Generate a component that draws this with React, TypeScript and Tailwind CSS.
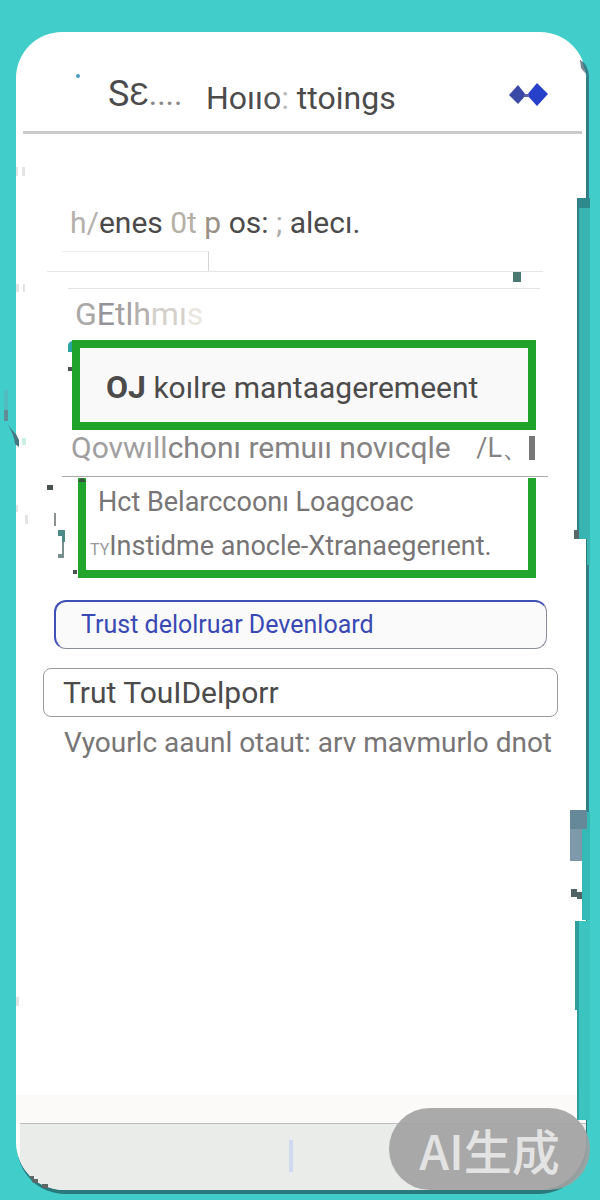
const sans = 'font-["Roboto","Liberation_Sans",sans-serif]';

function Diamonds() {
  return (
    <svg className="h-6 w-10" viewBox="0 0 40 24" aria-hidden="true">
      <path d="M0 12 L9 2 L17 12 L9 21 Z" fill="#3b49a6" />
      <path d="M18 12 L28 0 L39 11 L28 23 Z" fill="#2740c9" />
      <path d="M15 11 h5 v3 h-5 Z" fill="#5a64b0" />
    </svg>
  );
}

/* Broken pixels along the left rim of the card */
function LeftMarks() {
  return (
    <svg className="pointer-events-none absolute top-0 left-0 h-[1200px] w-24" viewBox="0 0 96 1200" aria-hidden="true">
      <path d="M4 390 h4 v30 h-4 Z" fill="#6f9fac" opacity=".35" />
      <path d="M4 410 h4 v11 h-4 Z" fill="#67818d" opacity=".8" />
      <path d="M7 423 Q13 432 16 434 L19 440 V447 L15 444 Q14 434 7 423 Z" fill="#467780" />
      <path d="M22 438 h4 v7 h-4 Z" fill="#c9f2e4" />
      <path d="M16 167 h2 v9 h-2 Z M22 167 h3 v9 h-3 Z M16 284 h3 v8 h-3 Z M23 284 h2 v8 h-2 Z M16 505 h2 v7 h-2 Z M25 515 h3 v9 h-3 Z M16 997 h3 v9 h-3 Z" fill="#e4e4e4" />
      <path d="M68 346 q0 -4 4 -5 v11 h-4 Z" fill="#28a3a5" />
      <path d="M68 367 h4 v4 h-4 Z M47 485 h6 v5 h-6 Z M73 570 h4 v4 h-4 Z" fill="#48524f" />
      <path d="M54 513 h2 v13 h-2 Z" fill="#8d9291" />
      <path d="M58 530 h7 v12 h-3 v-6 h-4 Z" fill="#4b8a86" />
      <path d="M64 542 v16 h-6 v-4 h4 v-12 Z" fill="#77908e" />
      <path d="M30 1176 h4 v3 h4 v4 h-5 Z M42 1184 h6 v4 h-6 Z" fill="#5c6765" />
      <path d="M78 482 q4 -8 8 0 Z" fill="#3c5440" />
    </svg>
  );
}

/* Notches cut into the right rim, with their shadow */
function RightMarks() {
  return (
    <svg className="pointer-events-none absolute top-0 right-0 h-[1200px] w-10" viewBox="560 0 40 1200" aria-hidden="true">
      <path d="M580 60 Q588 64 589 76 V200 H587 V76 Z" fill="#357f8a" />
      <path d="M580 60 q4 2 5 13 l-4 -5 Z" fill="#78858f" />
      <path d="M577 198 H590 V565 H587 V539 H579 V530 H577 Z" fill="#38b5b1" />
      <path d="M577 198 H590 V208 H577 Z" fill="#2f888c" />
      <path d="M577 198 h2 V532 h-2 Z" fill="#347e88" />
      <path d="M574 530 h5 v9 h-5 Z" fill="#57686b" />
      <path d="M587 565 h2 V812 h-2 Z" fill="#357f8a" />
      <path d="M582 812 H590 V920 H582 Z" fill="#35b9b7" />
      <path d="M570 810 H587 V829 H582 V861 H570 Z" fill="#7e9aaa" />
      <path d="M570 810 H587 V829 H570 Z" fill="#66899a" />
      <path d="M571 889 h6 v3 h5 v7 h-5 v-2 h-6 Z" fill="#4f6264" />
      <path d="M575 921 H590 V1120 H577 V1010 H575 Z" fill="#3bc4c0" />
      <path d="M575 921 h4 V1120 h-2 V1010 h-2 Z" fill="#2f9c9d" />
    </svg>
  );
}

function Footer() {
  return (
    <footer className="mt-auto">
      <div className="h-7 bg-[#fbfaf9]" />
      <div className="ml-1 flex h-[67px] justify-center border-t border-[#b9bfc0] bg-[#eaecea]">
        <div className="mt-4 mr-6 h-8 w-1 bg-[#cfdaf0]" />
      </div>
    </footer>
  );
}

export default function App() {
  return (
    <div className={`relative flex min-h-screen flex-col overflow-hidden bg-[#41cdc9] pt-8 pr-3.5 pb-2.5 pl-4 whitespace-nowrap text-[#4c4b4b] ${sans}`}>
      <main className="flex grow flex-col overflow-hidden rounded-t-[46px] rounded-b-[48px] bg-white shadow-[1px_4px_0_#2a7a7c]">
        <header className="mr-1 ml-[7px] flex h-[102px] items-center border-b-[3px] border-[#cbcbcb] pt-8 pl-[53px]">
          <span className="mb-11 h-1 w-1 rounded-full bg-[#4a9cc4]" />
          <h1 className="ml-7 flex items-center text-[32px] leading-10">
            <span className="flex w-[98px]">
              <span className="text-4xl">S</span>
              <span className="mb-2 self-end">Ɛ</span>
              <span className="text-[#888]">....</span>
            </span>
            <span>
              Hoıı<span className="text-[#555]">o</span>
              <span className="text-[#bbb]">:</span> ttoings
            </span>
          </h1>
          <div className="mr-[33px] mb-1.5 ml-auto">
            <Diamonds />
          </div>
        </header>

        <p className="mt-[69px] ml-[54px] text-[30px] leading-10">
          <span className="text-[#b5b0ab]">h/</span>enes <span className="text-[#b5b0a5]">0t</span>{' '}
          <span className="text-[#999186]">p</span> os: <span className="text-[#aaa]">;</span> alecı.
        </p>
        <div className="mt-2 ml-[46px] h-5 w-[147px] border-t border-r border-[#eeeeee] border-r-[#d5d5d5]" />
        <div className="mr-[43px] ml-[31px] flex h-[17px] justify-end border-t border-[#e6e6e6]">
          <span className="mr-[22px] h-2.5 w-2 bg-[#4c7872]" />
        </div>
        <div className="mr-[46px] ml-[52px] h-1.5 border-t border-[#e3e3e3]" />
        <p className="ml-[59px] text-[32px] leading-10">
          <span className="text-[#aaa8a6]">G</span>
          <span className="text-[#96949b]">E</span>
          <span className="text-[#a3a09f]">tl</span>
          <span className="text-[#b3b0ad]">h</span>
          <span className="text-[#d3d0ca]">mı</span>
          <span className="text-[#e9e6df]">s</span>
        </p>

        <button type="button" className="mt-1.5 mr-[50px] ml-14 h-[90px] border-8 border-[#1fa32a] bg-[#f9f9f9] pt-1 pl-[26px] text-left text-[30px] leading-10">
          <span className="text-[32px] font-bold">OJ</span> koılre mantaageremeent
        </button>
        <div className="mr-[51px] ml-[55px] flex h-9 items-center justify-between text-[30px] leading-9 text-[#858383]">
          <p>
            <span className="text-[#a09e9e]">Qovwıll</span>chonı remuıı novıcqle
          </p>
          <p className="flex items-center text-[27px]">
            /L、<span className="h-6 w-1.5 bg-[#777]" />
          </p>
        </div>
        <div className="mt-2.5 mr-[38px] ml-[46px] h-0.5 border-t border-[#aaaaaa]" />

        <section className="mr-[50px] ml-[62px] flex h-[100px] flex-col gap-1 border-8 border-t-0 border-[#22a52c] pt-1 text-[27px] leading-10 text-[#777575]">
          <p className="pl-3">Hct Belarccoonı Loagcoac</p>
          <p className="pl-1">
            <span className="text-base text-[#999]">TY</span>Instidme anocle-Xtranaegerıent.
          </p>
        </section>

        <button type="button" className="mt-[22px] mr-[39px] ml-[38px] h-[49px] rounded-xl border border-t-2 border-l-2 border-[#8a8d9c] border-t-[#4150b5] border-l-[#4150b5] bg-[#fafafa] pl-[25px] text-left text-[25px] text-[#3949b4]">
          Trust delolruar Devenloard
        </button>
        <button type="button" className="mt-[19px] mr-7 ml-[27px] h-[49px] rounded-lg border border-[#9b9b9b] pl-[19px] text-left text-[30px] leading-10">
          Trut TouIDelporr
        </button>
        <p className="mt-1.5 ml-12 text-[28px] leading-10 text-[#777575]">
          Vyourlc aaunl otaut: arv mavmurlo dnot
        </p>
        <Footer />
      </main>

      <LeftMarks />
      <RightMarks />
      <div className="absolute right-2.5 bottom-2.5 flex h-[82px] w-[201px] items-center justify-center rounded-full bg-[#a1a1a1]/90 font-['Noto_Sans_CJK_SC',sans-serif] text-5xl font-medium text-[#e3e3e3]">
        AI生成
      </div>
    </div>
  );
}
